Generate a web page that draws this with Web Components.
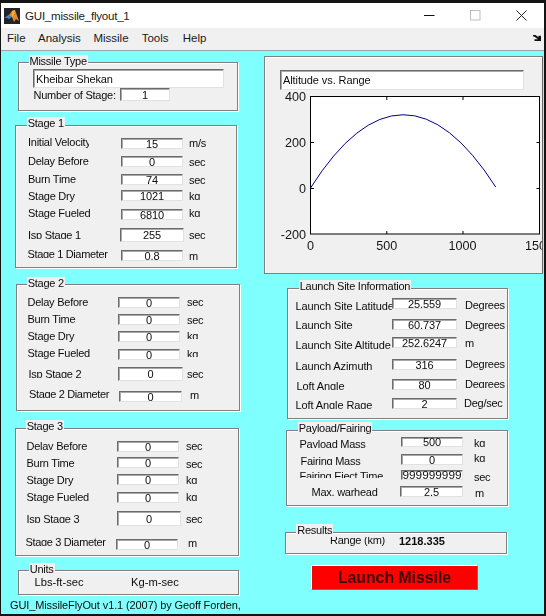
<!DOCTYPE html>
<html lang="en"><head><meta charset="utf-8"><title>GUI_missile_flyout_1</title>
<style>
html,body{margin:0;padding:0;background:#141414;height:100%;overflow:hidden}
</style></head>
<body>
<app-window>
  <div slot="left">
    <g-panel legend="Missile Type" lx="10.5" lt="-8" style="margin:11px 0 0 17px;width:220px;height:49px;--pad:6px 0 0 14px">
      <edit-box align="left" style="width:191px;height:19px">Kheibar Shekan</edit-box>
      <f-row style="margin-left:-14px" h="13" ix="101" iw="50" ih="13" lx="14.5" ly="1" value="1">Number of Stage:</f-row>
    </g-panel>
    <g-panel legend="Stage 1" lx="11.7" lt="-9" style="margin:14px 0 0 14px;width:222px;height:143px;--pad:12px 0 0 0">
      <f-row h="18" ix="105" iw="62" ih="11" lx="12" ly="-2" lw="61" uy="-1" ug="6" value="15" unit="m/s">Initial Velocity</f-row>
      <f-row h="18" ix="105" iw="62" ih="11" lx="12" ly="-1" uy="0" ug="6" value="0" unit="sec">Delay Before</f-row>
      <f-row h="16" ix="105" iw="62" ih="11" lx="12" ly="-1" uy="0" ug="6" value="74" unit="sec">Burn Time</f-row>
      <f-row h="19" ix="105" iw="62" ih="11" lx="12" ly="0" uy="0" ug="6" uh="10" value="1021" unit="kg">Stage Dry</f-row>
      <f-row h="19" ix="105" iw="62" ih="11" lx="12" ly="-2" uy="-2" ug="6" uh="10" value="6810" unit="kg">Stage Fueled</f-row>
      <f-row h="22" ix="104" iw="64" ih="14" lx="12" ly="1" lh="10" uy="1" ug="5" value="255" unit="sec">Isp Stage 1</f-row>
      <f-row h="12" ix="105" iw="62" ih="11" lx="11.5" ly="-2" lh="10" ls="-.35" uy="0" ug="6" value="0.8" unit="m">Stage 1 Diameter</f-row>
    </g-panel>
    <g-panel legend="Stage 2" lx="10.7" lt="-8" style="margin:16px 0 0 15px;width:224px;height:127px;--pad:12px 0 0 0">
      <f-row h="17" ix="101" iw="62" ih="11" lx="10.5" ly="-1" uy="-1" ug="7" value="0" unit="sec">Delay Before</f-row>
      <f-row h="17" ix="101" iw="62" ih="11" lx="10.5" ly="-1" uy="0" ug="7" value="0" unit="sec">Burn Time</f-row>
      <f-row h="18" ix="101" iw="62" ih="11" lx="10.5" ly="-1" uy="-1" ug="7" uh="9" value="0" unit="kg">Stage Dry</f-row>
      <f-row h="18" ix="101" iw="62" ih="11" lx="10.5" ly="-2" uy="-1" ug="7" uh="9" value="0" unit="kg">Stage Fueled</f-row>
      <f-row h="24" ix="101" iw="65" ih="14" lx="11.5" ly="1" lh="10" uy="1" ug="4" value="0" unit="sec">Isp Stage 2</f-row>
      <f-row h="12" ix="102" iw="63" ih="11" lx="12" ly="-3" lh="10" ls="-.35" uy="-2" ug="8" value="0" unit="m">Stage 2 Diameter</f-row>
    </g-panel>
    <g-panel legend="Stage 3" lx="10.7" lt="-9" style="margin:17px 0 0 14px;width:224px;height:128px;--pad:12px 0 0 0">
      <f-row h="16" ix="101" iw="62" ih="11" lx="10.5" ly="-1" lh="10" uy="-1" ug="7" value="0" unit="sec">Delay Before</f-row>
      <f-row h="17" ix="101" iw="62" ih="11" lx="10.5" ly="0" uy="1" ug="7" value="0" unit="sec">Burn Time</f-row>
      <f-row h="18" ix="101" iw="62" ih="11" lx="10.5" ly="0" uy="0" ug="7" uh="10" value="0" unit="kg">Stage Dry</f-row>
      <f-row h="19" ix="101" iw="62" ih="11" lx="10.5" ly="-1" uy="-1" ug="7" uh="10" value="0" unit="kg">Stage Fueled</f-row>
      <f-row h="28" ix="101" iw="64" ih="15" lx="10.5" ly="2" lh="10" uy="2" ug="5" value="0" unit="sec">Isp Stage 3</f-row>
      <f-row h="12" ix="100" iw="62" ih="11" lx="9.5" ly="-3" lh="10" ls="-.35" uy="-2" ug="10" value="0" unit="m">Stage 3 Diameter</f-row>
    </g-panel>
    <g-panel legend="Units" lx="10.7" lt="-8" style="margin:14px 0 0 17px;width:221px;height:25px;--pad:5px 0 0 15.5px">
      <units-line><span>Lbs-ft-sec</span><span>Kg-m-sec</span></units-line>
    </g-panel>
    <foot-note style="margin:3px 0 0 9px">GUI_MissileFlyOut v1.1 (2007) by Geoff Forden,</foot-note>
  </div>
  <div slot="right">
    <plot-panel title-text="Altitude vs. Range" style="margin:5px 0 0 0"></plot-panel>
    <g-panel legend="Launch Site Information" lx="11.7" lt="-9" style="margin:14px 0 0 23px;width:221px;height:131px;--pad:9px 0 0 0">
      <f-row h="21" ix="104" iw="65" ih="11" lx="7.5" ly="2" ls="-.1" uy="1" ug="8" value="25.559" unit="Degrees">Launch Site Latitude</f-row>
      <f-row h="18" ix="104" iw="65" ih="11" lx="7.5" ly="0" ls="-.1" uy="0" ug="8" value="60.737" unit="Degrees">Launch Site</f-row>
      <f-row h="22" ix="104" iw="65" ih="11" lx="7.5" ly="2" ls="-.1" uy="0" ug="8" value="252.6247" unit="m">Launch Site Altitude</f-row>
      <f-row h="20" ix="104" iw="65" ih="11" lx="7.5" ly="1" ls="-.1" uy="-1" ug="8" value="316" unit="Degrees">Launch Azimuth</f-row>
      <f-row h="19" ix="104" iw="65" ih="11" lx="8.5" ly="1" lh="10" ls="-.1" uy="-1" ug="8" uh="10" value="80" unit="Degrees">Loft Angle</f-row>
      <f-row h="12" ix="104" iw="65" ih="11" lx="7.5" ly="1" lh="10" ls="-.1" uy="-1" ug="7" value="2" unit="Deg/sec">Loft Angle Rage</f-row>
    </g-panel>
    <g-panel legend="Payload/Fairing" lx="11.7" lt="-9" style="margin:11px 0 0 22px;width:222px;height:76px;--pad:6px 0 0 0">
      <f-row h="17" ix="114" iw="62" ih="10" lx="12.5" ly="1" lh="10" uy="0" ug="11" uh="10" value="500" unit="kg">Payload Mass</f-row>
      <f-row h="16" ix="114" iw="62" ih="11" lx="13.5" ly="1" lh="10" uy="-2" ug="11" uh="10" value="0" unit="kg">Fairing Mass</f-row>
      <f-row h="16" ix="114" iw="62" ih="10" lx="12.5" ly="0" lh="8" vfs="11.8" uy="1" ug="11" value="999999999" unit="sec">Fairing Eject Time</f-row>
      <f-row h="12" ix="113" iw="63" ih="11" lx="24.5" ly="0" uy="1" ug="12" value="2.5" unit="m">Max. warhead</f-row>
    </g-panel>
    <g-panel legend="Results" lx="11.3" lt="-9" style="margin:26px 0 0 21px;width:222px;height:22px;--pad:3px 0 0 44px">
      <result-line value="1218.335">Range (km)</result-line>
    </g-panel>
    <launch-button style="margin:11px 0 0 47px">Launch Missile</launch-button>
  </div>
</app-window>
<script>
const SANS='"Liberation Sans",Arial,sans-serif';
function def(name,css,html,init){
  customElements.define(name,class extends HTMLElement{
    constructor(){super();this.attachShadow({mode:'open'}).innerHTML='<style>'+css+'</style>'+html;}
    connectedCallback(){if(init)init(this,this.shadowRoot);}
  });
}
def('app-window',`
  :host{display:grid;grid-template-rows:25px 22px 1fr;box-sizing:border-box;width:543px;height:611px;margin:3px 0 0 1px;background:#fff;font:11px ${SANS};letter-spacing:-.25px;color:#0c0c0c}
  .title{display:flex;align-items:center;background:#fff;padding-left:3px}
  .title svg{display:block}
  .title b{font:400 11.6px ${SANS};margin-left:5px;color:#222;flex:1}
  .ctl{display:grid;grid-template-columns:46px 46px 46px;height:100%}
  .ctl svg{display:block;margin:auto}
  .menu{display:flex;align-items:center;background:#f0f0f0;padding:0 3px 2px 6px;font:11.5px ${SANS};letter-spacing:0;color:#1a1a1a}
  .menu span:nth-child(1){width:31px}.menu span:nth-child(2){width:55.4px}.menu span:nth-child(3){width:48.3px}.menu span:nth-child(4){width:41px}.menu span:nth-child(5){flex:1}
  .canvas{display:grid;grid-template-columns:263px 280px;background:#80ffff;border-top:1px solid #9aa8a8;overflow:hidden;filter:blur(.3px)}
  .canvas>div{min-width:0}
`,`<div class="title">
  <svg width="16" height="16" viewBox="0 0 16 16"><rect width="16" height="16" fill="#20242a"/><path d="M0 10 5 7l3-4 3-1 4 11-3-2-2 3-2-5-3-1z" fill="#e8862a"/><path d="M0 10l5-3 3 2-3 2-2-1z" fill="#3a7fc0"/><path d="M8 3l3-1-2 7-1 0z" fill="#f2b13a"/></svg>
  <b>GUI_missile_flyout_1</b>
  <div class="ctl">
    <svg width="11" height="11" viewBox="0 0 11 11"><path d="M0 5.500h10.500" stroke="#111" stroke-width="1"/></svg>
    <svg width="11" height="11" viewBox="0 0 11 11"><rect x=".5" y=".5" width="9.500" height="9.500" fill="none" stroke="#bdbdbd"/></svg>
    <svg width="11" height="11" viewBox="0 0 11 11"><path d="M.5.5l10 10M10.500.5l-10 10" stroke="#222" stroke-width="1"/></svg>
  </div></div>
  <div class="menu"><span>File</span><span>Analysis</span><span>Missile</span><span>Tools</span><span>Help</span>
    <svg width="8" height="6" viewBox="0 0 8 6"><path d="M0 0h2.500l3 2.200V.8H8V6H1.500V4.300H5L1.500 1.800 0 1.200z" fill="#111"/></svg></div>
  <div class="canvas"><div><slot name="left"></slot></div><div><slot name="right"></slot></div></div>`);
def('g-panel',`
  :host{display:block;position:relative;box-sizing:border-box;background:#f0f0f0;border:1px solid #808080;box-shadow:1px 1px 0 #fff,inset 1px 1px 0 #fff;padding:var(--pad,0)}
  .lg{position:absolute;background:#f0f0f0;padding:0 1px;line-height:12px;height:12px;white-space:nowrap}
`,`<div class="lg"></div><slot></slot>`,(h,s)=>{const l=s.querySelector('.lg');l.textContent=h.getAttribute('legend');l.style.left=(h.getAttribute('lx')-1)+'px';l.style.top=h.getAttribute('lt')+'px';});
def('edit-box',`
  :host{display:block;box-sizing:border-box;background:#fff;border:1px solid;border-color:#6c6c6c #e2e2e2 #e2e2e2 #6c6c6c;box-shadow:inset 1px 1px 0 #a8a8a8;overflow:hidden;white-space:nowrap;text-align:center;letter-spacing:-.1px}
  :host([align=left]){text-align:left;padding-left:2px}
  div{height:100%;display:flex;align-items:center;box-sizing:border-box}
  :host(:not([align=left])) div{justify-content:center}
`,`<div><slot></slot></div>`);
def('f-row',`
  :host{display:grid;position:relative}
  .l{position:relative;overflow:hidden;white-space:nowrap;line-height:12px;box-sizing:border-box}
  .l div{overflow:hidden}
  edit-box{position:relative;z-index:1}
  .u{position:relative;z-index:2;align-self:start;justify-self:start;background:#f0f0f0;white-space:nowrap;line-height:12px;overflow:hidden;padding-right:2px}
`,`<div class="l"><div><slot></slot></div></div><edit-box></edit-box><div class="u"></div>`,(h,s)=>{
  const a=(n,d)=>h.hasAttribute(n)?h.getAttribute(n):d;
  h.style.height=a('h')+'px';
  h.style.gridTemplateColumns=`${a('ix')}px ${a('iw')}px auto`;
  const l=s.querySelector('.l'),i=s.querySelector('edit-box'),u=s.querySelector('.u');
  l.style.paddingLeft=a('lx')+'px';
  l.style.marginTop=a('ly',0)+'px';
  l.style.height=a('lh',12)+'px';
  if(a('ls'))l.style.letterSpacing=a('ls')+'px';
  if(a('lw'))l.firstElementChild.style.width=a('lw')+'px';
  i.style.height=a('ih')+'px';i.textContent=a('value','');
  if(a('vfs')){i.style.fontSize=a('vfs')+'px';i.style.letterSpacing='0';}
  if(a('unit')){u.textContent=a('unit');u.style.marginTop=a('uy',0)+'px';u.style.marginLeft=a('ug',6)+'px';u.style.height=a('uh',12)+'px';}
  else u.remove();
});
def('units-line',`
  :host{display:flex;line-height:12px;font-size:11.2px;letter-spacing:0}
  ::slotted(span:first-child){width:96.5px}
`,`<slot></slot>`);
def('foot-note',`:host{display:block;white-space:nowrap;line-height:14px;letter-spacing:-.11px}`,`<slot></slot>`);
def('result-line',`
  :host{display:flex;line-height:12px}
  .k{height:10px;overflow:hidden;width:69px;margin-top:.5px}
  .k div{margin-top:-3px;white-space:nowrap}
  b{margin-top:-1.5px;letter-spacing:0}
`,`<div class="k"><div><slot></slot></div></div><b></b>`,(h,s)=>{s.querySelector('b').textContent=h.getAttribute('value');});
def('launch-button',`
  :host{display:flex;align-items:center;justify-content:center;box-sizing:border-box;width:167px;height:25px;background:#ff0000;border:1.5px solid;border-color:#fff #707070 #707070 #fff;color:#3a0505;font:700 15.8px ${SANS};letter-spacing:0}
`,`<slot></slot>`);
def('plot-panel',`
  :host{display:block;box-sizing:border-box;width:279px;height:218px;background:#f0f0f0;border:1px solid #808080;border-right-color:#666;border-bottom-color:#808080;box-shadow:inset 1px 1px 0 #fff;overflow:hidden;padding:13px 0 0 15px}
  edit-box{width:244px;height:20px}
  svg{display:block;margin-left:-15px}
  text{font:12.6px ${SANS};letter-spacing:0;fill:#141414}
`,`<edit-box align="left"></edit-box>
<svg width="278" height="183" viewBox="265 90 278 183">
  <rect x="310.500" y="96.500" width="229" height="137.500" fill="#fff" stroke="#000"/>
  <path d="M386.800 97v3M463 97v3M386.800 234v-3M463 234v-3M311 142.500h3M311 188.500h3M539.500 142.500h-3M539.500 188.500h-3" stroke="#000" fill="none"/>
  <path d="M310.500 188Q403 42 495.700 187" stroke="#00007f" fill="none"/>
  <text x="306" y="101" text-anchor="end">400</text>
  <text x="306" y="147" text-anchor="end">200</text>
  <text x="306" y="193" text-anchor="end">0</text>
  <text x="306" y="239" text-anchor="end">-200</text>
  <text x="310.500" y="250" text-anchor="middle">0</text>
  <text x="386.800" y="250" text-anchor="middle">500</text>
  <text x="462.500" y="250" text-anchor="middle">1000</text>
  <text x="539" y="250" text-anchor="middle">1500</text>
</svg>`,(h,s)=>{s.querySelector('edit-box').textContent=h.getAttribute('title-text');});
</script>
</body></html>
